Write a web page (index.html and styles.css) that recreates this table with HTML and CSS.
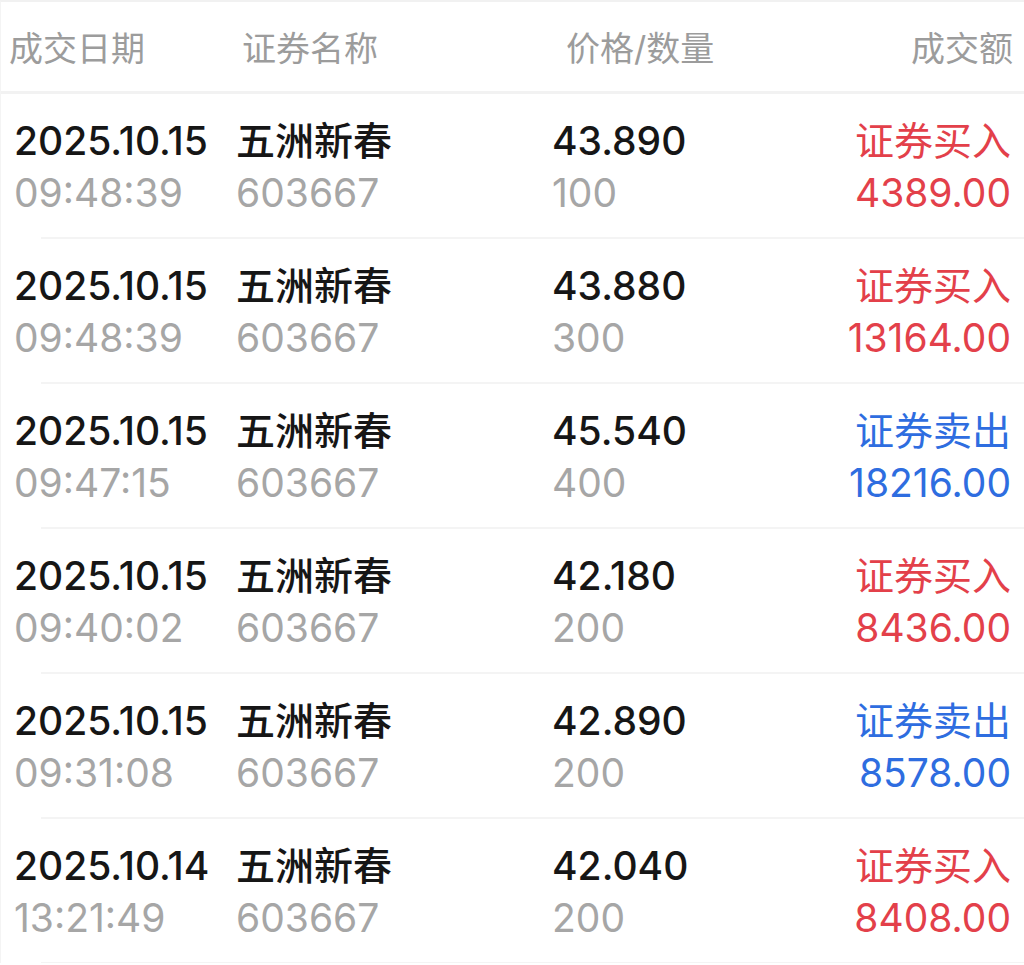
FILE: index.html
```html
<!DOCTYPE html>
<html lang="zh-CN">
<head>
<meta charset="utf-8">
<title>成交记录</title>
<link rel="stylesheet" href="styles.css">
</head>
<body>
<div class="page">
  <div class="header">
    <div class="h-date">成交日期</div>
    <div class="h-name">证券名称</div>
    <div class="h-price">价格/数量</div>
    <div class="h-amount">成交额</div>
  </div>
  <div class="list">
    <div class="row">
      <div class="cell"><div class="main">2025.10.15</div><div class="sub">09:48:39</div></div>
      <div class="cell"><div class="main">五洲新春</div><div class="sub">603667</div></div>
      <div class="cell"><div class="main">43.890</div><div class="sub">100</div></div>
      <div class="cell right buy"><div class="act">证券买入</div><div class="amt">4389.00</div></div>
    </div>
    <div class="row">
      <div class="cell"><div class="main">2025.10.15</div><div class="sub">09:48:39</div></div>
      <div class="cell"><div class="main">五洲新春</div><div class="sub">603667</div></div>
      <div class="cell"><div class="main">43.880</div><div class="sub">300</div></div>
      <div class="cell right buy"><div class="act">证券买入</div><div class="amt">13164.00</div></div>
    </div>
    <div class="row">
      <div class="cell"><div class="main">2025.10.15</div><div class="sub">09:47:15</div></div>
      <div class="cell"><div class="main">五洲新春</div><div class="sub">603667</div></div>
      <div class="cell"><div class="main">45.540</div><div class="sub">400</div></div>
      <div class="cell right sell"><div class="act">证券卖出</div><div class="amt">18216.00</div></div>
    </div>
    <div class="row">
      <div class="cell"><div class="main">2025.10.15</div><div class="sub">09:40:02</div></div>
      <div class="cell"><div class="main">五洲新春</div><div class="sub">603667</div></div>
      <div class="cell"><div class="main">42.180</div><div class="sub">200</div></div>
      <div class="cell right buy"><div class="act">证券买入</div><div class="amt">8436.00</div></div>
    </div>
    <div class="row">
      <div class="cell"><div class="main">2025.10.15</div><div class="sub">09:31:08</div></div>
      <div class="cell"><div class="main">五洲新春</div><div class="sub">603667</div></div>
      <div class="cell"><div class="main">42.890</div><div class="sub">200</div></div>
      <div class="cell right sell"><div class="act">证券卖出</div><div class="amt">8578.00</div></div>
    </div>
    <div class="row">
      <div class="cell"><div class="main">2025.10.14</div><div class="sub">13:21:49</div></div>
      <div class="cell"><div class="main">五洲新春</div><div class="sub">603667</div></div>
      <div class="cell"><div class="main">42.040</div><div class="sub">200</div></div>
      <div class="cell right buy"><div class="act">证券买入</div><div class="amt">8408.00</div></div>
    </div>
  </div>
</div>
</body>
</html>
```

FILE: styles.css
```css
html, body {
  margin: 0;
  padding: 0;
  background: #ffffff;
}

body {
  font-family: Inter, "Noto Sans CJK SC", "Noto Sans", sans-serif;
  color: #1a1a1a;
}

.page {
  width: 1024px;
  border-top: 2px solid #f1f1f1;
  border-left: 1px solid #f4f4f4;
  box-sizing: border-box;
}

.header {
  display: grid;
  grid-template-columns: 233px 324px 1fr auto;
  align-items: center;
  height: 89px;
  padding: 0 11px 0 8px;
  font-size: 34px;
  color: #9c9c9c;
  border-bottom: 3px solid #f2f2f2;
}

.h-amount {
  text-align: right;
}

.list {
  display: flex;
  flex-direction: column;
}

.row {
  display: grid;
  grid-template-columns: 222px 316px 1fr auto;
  padding: 21px 13px 19px 13px;
  position: relative;
}

.row::after {
  content: "";
  position: absolute;
  left: 40px;
  right: 0;
  bottom: -1px;
  height: 2px;
  background: #f4f4f4;
}

.row + .row {
  margin-top: 1px;
}

.cell {
  display: flex;
  flex-direction: column;
}

.cell.right {
  align-items: flex-end;
}

.main, .sub, .act, .amt {
  font-size: 39px;
  line-height: 52px;
  white-space: nowrap;
}

.main {
  color: #161616;
  font-weight: 450;
}

.sub {
  color: #a6a6a6;
}

.buy {
  color: #e3404a;
}

.sell {
  color: #2e6de0;
}
```
